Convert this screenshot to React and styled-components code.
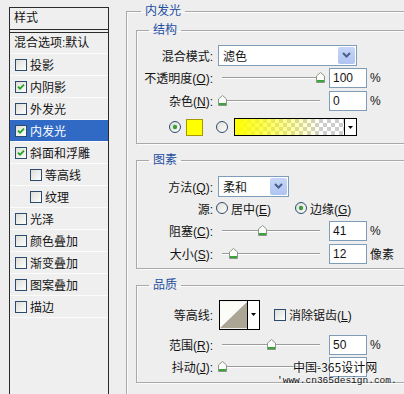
import React from "react";
import styled, { createGlobalStyle } from "styled-components";

const GlobalStyle = createGlobalStyle`
  html, body {
    margin: 0;
    padding: 0;
    background: #eeeeee;
  }
  body {
    font-family: "Liberation Sans", "Noto Sans CJK SC", sans-serif;
    font-size: 12px;
    color: #141414;
  }
`;

// -----------------------------------------
// left: list of layer styles
// -----------------------------------------

const styles = [
  { name: "投影", checked: false },
  { name: "内阴影", checked: true },
  { name: "外发光", checked: false },
  { name: "内发光", checked: true, active: true },
  { name: "斜面和浮雕", checked: true },
  { name: "等高线", checked: false, sub: true },
  { name: "纹理", checked: false, sub: true },
  { name: "光泽", checked: false },
  { name: "颜色叠加", checked: false },
  { name: "渐变叠加", checked: false },
  { name: "图案叠加", checked: false },
  { name: "描边", checked: false },
];

function CheckBox({ checked }) {
  return (
    <svg width="12" height="12" viewBox="0 0 12 12">
      <defs>
        <linearGradient id="cbg" x1="0" y1="0" x2="1" y2="1">
          <stop offset="0" stopColor="#dcdcd6" />
          <stop offset="1" stopColor="#ffffff" />
        </linearGradient>
      </defs>
      <rect x="0.5" y="0.5" width="11" height="11" fill="url(#cbg)" stroke="#2a4a6e" />
      {checked && (
        <path d="M3 5.6 L5 7.8 L9 3.6" fill="none" stroke="#21a121" strokeWidth="1.8" />
      )}
    </svg>
  );
}

function Radio({ checked }) {
  return (
    <svg width="12" height="12" viewBox="0 0 12 12">
      <defs>
        <linearGradient id="rbg" x1="0" y1="0" x2="1" y2="1">
          <stop offset="0" stopColor="#dcdcd6" />
          <stop offset="1" stopColor="#ffffff" />
        </linearGradient>
      </defs>
      <circle cx="6" cy="6" r="5.5" fill="url(#rbg)" stroke="#2e4c6c" />
      {checked && <circle cx="6" cy="6" r="2.2" fill="#3c9c3c" />}
    </svg>
  );
}

function Thumb() {
  return (
    <svg width="9" height="11" viewBox="0 0 9 11">
      <path d="M0.5 4 L4.5 0.5 L8.5 4 V10.5 H0.5 Z" fill="#fbfbf8" stroke="#8a968a" />
      <rect x="1" y="8" width="7" height="2" fill="#3aa33a" />
    </svg>
  );
}

function Chevron() {
  return (
    <svg width="9" height="6" viewBox="0 0 9 6">
      <path d="M1 1 L4.5 4.5 L8 1" fill="none" stroke="#4a5f8a" strokeWidth="2" />
    </svg>
  );
}

// -----------------------------------------
// right: inner glow settings
// -----------------------------------------

function Slider({ value }) {
  return (
    <SliderBox>
      <Track />
      <ThumbAt style={{ left: 4 + value * 98 - 4.5 }}>
        <Thumb />
      </ThumbAt>
    </SliderBox>
  );
}

function SliderRow({ label, value, text, unit, h }) {
  return (
    <Row $h={h}>
      <Label>{label}</Label>
      <Slider value={value} />
      <NumBox>{text}</NumBox>
      {unit && <Unit>{unit}</Unit>}
    </Row>
  );
}

export default function App() {
  return (
    <Window>
      <GlobalStyle />
      <StyleList>
        <ListHeader>样式</ListHeader>
        <BlendRow>混合选项:默认</BlendRow>
        {styles.map((s) => (
          <Item key={s.name} $active={s.active} $sub={s.sub}>
            <CheckBox checked={s.checked} />
            <span>{s.name}</span>
          </Item>
        ))}
      </StyleList>

      <Outer>
        <Legend $offset={5}>内发光</Legend>

        <Group $pt={6} $pb={1}>
          <Legend $offset={12}>结构</Legend>
          <Row $h={22}>
            <Label>混合模式:</Label>
            <Select $w={139}>
              <span>滤色</span>
              <DropButton>
                <Chevron />
              </DropButton>
            </Select>
          </Row>
          <SliderRow
            h={23}
            label={<>不透明度(<u>O</u>):</>}
            value={1}
            text="100"
            unit="%"
          />
          <SliderRow
            h={23}
            label={<>杂色(<u>N</u>):</>}
            value={0}
            text="0"
            unit="%"
          />
          <ColorRow>
            <Radio checked />
            <Swatch />
            <Radio />
            <GradientBox>
              <GradientFill />
              <ArrowCell>
                <svg width="5" height="3" viewBox="0 0 5 3">
                  <path d="M0 0 H5 L2.5 3 Z" fill="#000" />
                </svg>
              </ArrowCell>
            </GradientBox>
          </ColorRow>
        </Group>

        <Group $pt={7} $pb={3} $mt={8}>
          <Legend $offset={12}>图素</Legend>
          <Row $h={22}>
            <Label>方法(<u>Q</u>):</Label>
            <Select $w={71}>
              <span>柔和</span>
              <DropButton>
                <Chevron />
              </DropButton>
            </Select>
          </Row>
          <Row $h={22}>
            <Label $gap={3}>源:</Label>
            <Radio />
            <RadioText>居中(<u>E</u>)</RadioText>
            <Spacer $w={24} />
            <Radio checked />
            <RadioText>边缘(<u>G</u>)</RadioText>
          </Row>
          <SliderRow
            h={23}
            label={<>阻塞(<u>C</u>):</>}
            value={0.41}
            text="41"
            unit="%"
          />
          <SliderRow
            h={23}
            label={<>大小(<u>S</u>):</>}
            value={0.12}
            text="12"
            unit="像素"
          />
        </Group>

        <Group $pt={2} $pb={4} $mt={8}>
          <Legend $offset={12}>品质</Legend>
          <Row $h={39}>
            <Label $gap={6}>等高线:</Label>
            <ContourBox>
              <svg width="29" height="28" viewBox="0 0 29 28">
                <rect width="29" height="28" fill="#fbfbf8" />
                <path d="M0 28 L29 0 V28 Z" fill="#aba595" />
              </svg>
              <ArrowCell>
                <svg width="5" height="3" viewBox="0 0 5 3">
                  <path d="M0 0 H5 L2.5 3 Z" fill="#000" />
                </svg>
              </ArrowCell>
            </ContourBox>
            <Spacer $w={14} />
            <CheckBox />
            <RadioText>消除锯齿(<u>L</u>)</RadioText>
          </Row>
          <SliderRow
            h={21}
            label={<>范围(<u>R</u>):</>}
            value={0.5}
            text="50"
            unit="%"
          />
          {/* the jitter value and unit sit under the watermark */}
          <SliderRow h={23} label={<>抖动(<u>J</u>):</>} value={0} text="" />
        </Group>
      </Outer>

      <WatermarkTitle>中国-365设计网</WatermarkTitle>
      <WatermarkUrl>'www.cn365design.com.</WatermarkUrl>
    </Window>
  );
}

//Styling the component

const Window = styled.div`
  position: relative;
  width: 404px;
  height: 394px;
  overflow: hidden;
  display: flex;
  align-items: flex-start;
  background: #eeeeee;
`;

const StyleList = styled.div`
  flex: none;
  box-sizing: border-box;
  width: 100px;
  height: 400px;
  margin: 7px 0 0 9px;
  border: 1px solid #2b2b2b;
  background: #efefef;
`;

const ListHeader = styled.div`
  height: 21px;
  line-height: 21px;
  padding-left: 4px;
  border-bottom: 1px solid #2b2b2b;
`;

const BlendRow = styled.div`
  margin-top: 2px;
  height: 20px;
  line-height: 20px;
  padding-left: 4px;
  border-top: 1px solid #2b2b2b;
  border-bottom: 1px solid #fbfbfb;
  white-space: nowrap;
`;

const Item = styled.div`
  display: flex;
  align-items: center;
  gap: 3px;
  height: 21px;
  padding-left: ${(p) => (p.$sub ? 20 : 5)}px;
  border-bottom: 1px solid #fbfbfb;
  background: ${(p) => (p.$active ? "#316ac5" : "transparent")};
  color: ${(p) => (p.$active ? "#ffffff" : "#141414")};
  white-space: nowrap;
`;

const Outer = styled.fieldset`
  flex: none;
  width: 300px;
  min-height: 420px;
  margin: 3px 0 0 17px;
  padding: 3px 0 0 9px;
  border: 1px solid #a9a9a9;
  box-shadow: inset 1px 1px 0 #fbfbfb;
`;

const Group = styled.fieldset`
  width: 300px;
  margin: ${(p) => p.$mt || 0}px 0 0 0;
  padding: ${(p) => p.$pt}px 0 ${(p) => p.$pb}px 0;
  border: 1px solid #a9a9a9;
  box-shadow: inset 1px 1px 0 #fbfbfb, 1px 1px 0 #fbfbfb;
`;

const Legend = styled.legend`
  margin-left: ${(p) => p.$offset}px;
  padding: 0 4px;
  line-height: 16px;
  color: #1f4f9f;
`;

const Row = styled.div`
  display: flex;
  align-items: center;
  height: ${(p) => p.$h}px;
  white-space: nowrap;
`;

const Label = styled.span`
  flex: none;
  width: 76px;
  margin-right: ${(p) => (p.$gap !== undefined ? p.$gap : 5)}px;
  text-align: right;
  u {
    text-underline-offset: 1px;
  }
`;

const Select = styled.div`
  box-sizing: border-box;
  width: ${(p) => p.$w}px;
  height: 21px;
  display: flex;
  align-items: center;
  justify-content: space-between;
  padding: 0 1px 0 4px;
  border: 1px solid #7f9db9;
  background: #ffffff;
`;

const DropButton = styled.span`
  width: 17px;
  height: 17px;
  display: flex;
  align-items: center;
  justify-content: center;
  border-radius: 2px;
  background: linear-gradient(#c6d6f8, #b0c4f2);
`;

const SliderBox = styled.div`
  position: relative;
  flex: none;
  width: 108px;
  height: 12px;
`;

const Track = styled.div`
  position: absolute;
  left: 4px;
  top: 5px;
  width: 98px;
  height: 1px;
  background: #9c9c9c;
  border-bottom: 1px solid #ffffff;
`;

const ThumbAt = styled.div`
  position: absolute;
  top: 0;
  height: 11px;
  line-height: 0;
`;

const NumBox = styled.div`
  flex: none;
  box-sizing: border-box;
  width: 38px;
  height: 20px;
  margin-left: 3px;
  padding-left: 3px;
  line-height: 18px;
  border: 1px solid #7f9db9;
  background: #ffffff;
`;

const Unit = styled.span`
  margin-left: 3px;
`;

const ColorRow = styled.div`
  display: flex;
  align-items: center;
  height: 30px;
  padding-left: 32px;
  & > svg:nth-of-type(2) {
    margin-left: 13px;
  }
`;

const Swatch = styled.div`
  flex: none;
  box-sizing: border-box;
  width: 17px;
  height: 17px;
  margin-left: 5px;
  border: 1px solid #a69800;
  background: #ffff00;
`;

const GradientBox = styled.div`
  flex: none;
  box-sizing: border-box;
  display: flex;
  width: 123px;
  height: 18px;
  margin-left: 6px;
  border: 1px solid #000000;
  background-color: #ffffff;
  background-image: linear-gradient(45deg, #cdcdcd 25%, transparent 25%),
    linear-gradient(-45deg, #cdcdcd 25%, transparent 25%),
    linear-gradient(45deg, transparent 75%, #cdcdcd 75%),
    linear-gradient(-45deg, transparent 75%, #cdcdcd 75%);
  background-size: 8px 8px;
  background-position: 0 0, 0 4px, 4px -4px, -4px 0;
`;

const GradientFill = styled.div`
  flex: 1;
  background: linear-gradient(to right, #ffff00 0%, rgba(255, 255, 0, 0.5) 40%, rgba(255, 255, 0, 0) 80%);
`;

const ArrowCell = styled.div`
  flex: none;
  width: 11px;
  display: flex;
  align-items: center;
  justify-content: center;
  border-left: 1px solid #000000;
  background: #ffffff;
`;

const RadioText = styled.span`
  margin-left: 3px;
`;

const Spacer = styled.span`
  flex: none;
  width: ${(p) => p.$w}px;
`;

const ContourBox = styled.div`
  flex: none;
  box-sizing: border-box;
  display: flex;
  width: 41px;
  height: 30px;
  border: 1px solid #000000;
  svg {
    display: block;
  }
`;

const WatermarkTitle = styled.div`
  position: absolute;
  left: 293px;
  top: 359px;
  font-family: "Noto Sans CJK SC", sans-serif;
  font-size: 12px;
  line-height: 16px;
  color: #111111;
  white-space: nowrap;
  text-shadow: 0 0 2px #ffffff, 0 0 2px #ffffff;
`;

const WatermarkUrl = styled.div`
  position: absolute;
  left: 277px;
  top: 375px;
  font-family: "Liberation Mono", monospace;
  font-size: 9.5px;
  line-height: 12px;
  color: #111111;
  white-space: nowrap;
  text-shadow: 0 0 2px #ffffff;
`;
